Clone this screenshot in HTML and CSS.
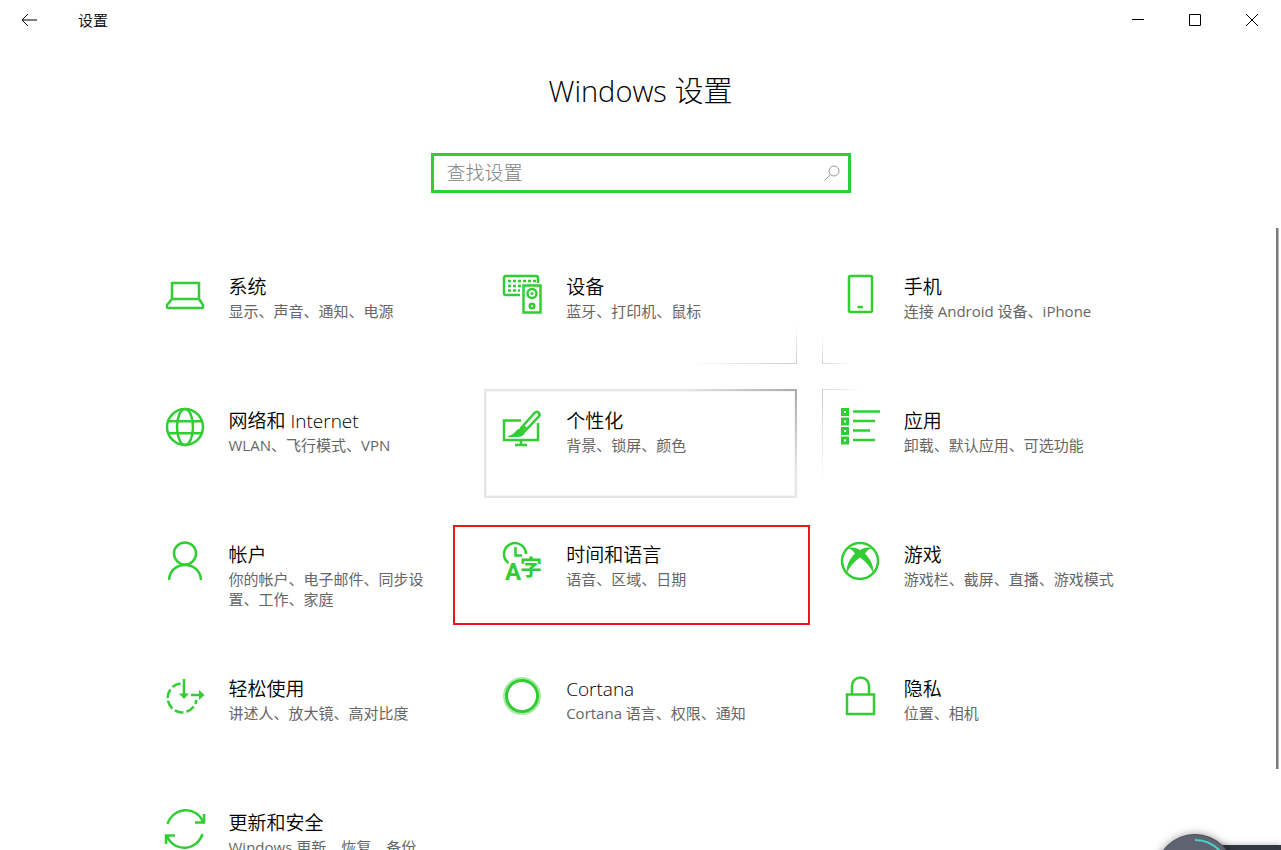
FILE: index.html
```html
<!DOCTYPE html>
<html lang="zh-CN">
  <head>
    <meta charset="UTF-8" />
    <meta name="viewport" content="width=device-width, initial-scale=1.0" />
    <title>设置</title>
    <link rel="stylesheet" href="styles.css">
  </head>
  <body>
    <header class="titlebar">
      <button class="back" aria-label="返回">
        <svg width="16" height="14" viewBox="0 0 16 14"><path d="M7 1L1 7l6 6M1 7h15" /></svg>
      </button>
      <span class="app-name">设置</span>
      <div class="window-buttons">
        <button aria-label="最小化"><svg width="12" height="12" viewBox="0 0 12 12"><path d="M0 5.5h12" /></svg></button>
        <button aria-label="最大化"><svg width="12" height="12" viewBox="0 0 12 12"><path d="M.5.5h11v11H.5z" /></svg></button>
        <button aria-label="关闭"><svg width="12" height="12" viewBox="0 0 12 12"><path d="M0 0l12 12M12 0L0 12" /></svg></button>
      </div>
    </header>

    <h1>Windows 设置</h1>

    <form class="search">
      <input type="text" placeholder="查找设置" aria-label="查找设置" />
      <button type="button" aria-label="搜索">
        <svg width="16" height="16" viewBox="0 0 16 16"><circle cx="10" cy="6" r="5" /><path d="M6.5 9.5L.5 15.5" /></svg>
      </button>
    </form>

    <main class="content">
      <nav class="tiles">
        <a class="tile" href="#system">
          <svg class="icon" viewBox="0 0 38 38"><path d="M6 9h27v16H6zM6 25l-5 6v2q0 1 1 1h34q1 0 1-1v-2l-4-6" /></svg>
          <div class="text">
            <h2>系统</h2>
            <p>显示、声音、通知、电源</p>
          </div>
        </a>
        <a class="tile near-above" href="#devices">
          <svg class="icon" viewBox="0 0 38 38">
            <path d="M17 21H3q-2 0-2-2V4q0-2 2-2h30q2 0 2 2v5" />
            <path class="keys" d="M5 7h29M5 12h15M5 16.500h3M10 16.500h7" />
            <path d="M20.500 11.500h17v27h-17z" />
            <circle cx="29" cy="19.500" r="4.500" stroke-width="2.500" /><circle class="fill" cx="29" cy="19.500" r="1.500" />
            <circle cx="29" cy="32" r="2.300" stroke-width="2.500" />
          </svg>
          <div class="text">
            <h2>设备</h2>
            <p>蓝牙、打印机、鼠标</p>
          </div>
        </a>
        <a class="tile near-corner" href="#phone">
          <svg class="icon" viewBox="0 0 38 38"><rect x="8" y="2" width="23" height="36" rx="1.500" /><path d="M16.500 33h5.500" /></svg>
          <div class="text">
            <h2>手机</h2>
            <p>连接 Android 设备、iPhone</p>
          </div>
        </a>
        <a class="tile" href="#network">
          <svg class="icon" viewBox="0 0 38 38"><circle cx="19" cy="19" r="18" /><ellipse cx="19" cy="19" rx="8" ry="18" /><path d="M2 13.300h34M2 25.300h34" /></svg>
          <div class="text">
            <h2>网络和 Internet</h2>
            <p>WLAN、飞行模式、VPN</p>
          </div>
        </a>
        <a class="tile hovered" href="#personalization">
          <svg class="icon" viewBox="0 0 38 38">
            <path d="M18 12.500H1V32h34V15M18 32v5M12 37h12" />
            <path d="M18 20L31.500 5q2.200-2.200 4.200-.4 1.900 2-.3 4.200L21.500 23.500zM20 18l3.500 3.500" />
            <path class="fill" d="M5 28q5-1 8-5 3-3.500 6.500-1.500 3.500 3 1 5.500-2 2-6 2H5z" />
          </svg>
          <div class="text">
            <h2>个性化</h2>
            <p>背景、锁屏、颜色</p>
          </div>
        </a>
        <a class="tile near-right" href="#apps">
          <svg class="icon" viewBox="0 0 38 38">
            <path stroke-width="3" d="M1.500 1.500h5v5h-5zM1.500 11h5v5h-5zM1.500 20.500h5v5h-5zM1.500 30h5v5h-5z" />
            <path stroke-width="2.500" d="M12 3.500h27M12 13h22M12 22.500h17M12 32h22" />
          </svg>
          <div class="text">
            <h2>应用</h2>
            <p>卸载、默认应用、可选功能</p>
          </div>
        </a>
        <a class="tile" href="#accounts">
          <svg class="icon" viewBox="0 0 38 38"><circle cx="19" cy="11.500" r="11" /><path d="M3 38c1-20 31-20 32 0" /></svg>
          <div class="text">
            <h2>帐户</h2>
            <p>你的帐户、电子邮件、同步设<br>置、工作、家庭</p>
          </div>
        </a>
        <a class="tile marked" href="#time">
          <svg class="icon" viewBox="0 0 38 38">
            <path d="M5.500 21A11 11 0 1 1 23 12M12.500 5v8.500H19" />
            <text class="latin" x="2" y="38">A</text>
            <text class="hanzi" x="17" y="33">字</text>
          </svg>
          <div class="text">
            <h2>时间和语言</h2>
            <p>语音、区域、日期</p>
          </div>
        </a>
        <a class="tile" href="#gaming">
          <svg class="icon" viewBox="0 0 38 38">
            <circle cx="19" cy="19" r="18" />
            <path class="fill" d="M7 6.500c4-2 8-1 12 1.500 4-2.500 8-3.500 12-1.500-3 .5-5 2-7 5 6 6 9 13 8 19-3-6-7-11-13-15-6 4-10 9-13 15-1-6 2-13 8-19-2-3-4-4.500-7-5z" />
          </svg>
          <div class="text">
            <h2>游戏</h2>
            <p>游戏栏、截屏、直播、游戏模式</p>
          </div>
        </a>
        <a class="tile" href="#ease">
          <svg class="icon" viewBox="0 0 38 38">
            <path stroke-dasharray="9 3" d="M14.500 7.500A14.500 14.500 0 1 0 30.500 24" />
            <path d="M18 3v17M25 19h10" />
            <path class="fill" d="M13 17.500h10L18 23zM33 14v10l5.500-5z" />
          </svg>
          <div class="text">
            <h2>轻松使用</h2>
            <p>讲述人、放大镜、高对比度</p>
          </div>
        </a>
        <a class="tile" href="#cortana">
          <svg class="icon" viewBox="0 0 38 38"><circle class="halo" cx="19" cy="20" r="17" /><circle cx="19" cy="20" r="15.500" stroke-width="3" /></svg>
          <div class="text">
            <h2>Cortana</h2>
            <p>Cortana 语言、权限、通知</p>
          </div>
        </a>
        <a class="tile" href="#privacy">
          <svg class="icon" viewBox="0 0 38 38"><path d="M6 18.500h27V38H6zM11 18.500V10a8.500 8.500 0 0 1 17 0v8.500" /></svg>
          <div class="text">
            <h2>隐私</h2>
            <p>位置、相机</p>
          </div>
        </a>
        <a class="tile" href="#update">
          <svg class="icon" viewBox="0 0 38 38"><path d="M1.500 14C7-3 30-5 37 12M38 4v8.500h-9M36.500 24C31 41 8 43 1 26M0 34v-8.500h9" /></svg>
          <div class="text">
            <h2>更新和安全</h2>
            <p>Windows 更新、恢复、备份</p>
          </div>
        </a>
      </nav>
      <div class="scroll-thumb"></div>
    </main>

    <div class="float-widget">
      <div class="float-bar"></div>
      <div class="float-ball">
        <svg width="80" height="80" viewBox="0 0 80 80"><path d="M40 6a34 34 0 0 1 34 34" /></svg>
      </div>
    </div>
  </body>
</html>
```
FILE: styles.css
```css
* {
    box-sizing: border-box;
}

body {
    margin: 0;
    height: 100vh;
    display: flex;
    flex-direction: column;
    align-items: center;
    overflow: hidden;
    position: relative;
    background: #fff;
    color: #000;
    font-family: "Open Sans", "Noto Sans CJK SC", sans-serif;
}

button {
    padding: 0;
    border: none;
    background: none;
    display: flex;
    align-items: center;
    justify-content: center;
}

svg {
    fill: none;
    stroke: #000;
    overflow: visible;
}

.titlebar {
    width: 100%;
    height: 40px;
    flex-shrink: 0;
    display: flex;
    align-items: center;
    padding-right: 1px;
}

.back {
    width: 58px;
    height: 40px;
}

.app-name {
    margin-left: 20px;
    font-size: 15px;
    font-weight: 350;
    line-height: 20px;
}

.window-buttons {
    display: flex;
    margin-left: auto;
}

.window-buttons button {
    width: 57px;
    height: 40px;
}

h1 {
    margin: 30px 0 42px;
    font-size: 29px;
    font-weight: 300;
    line-height: 41px;
}

.search {
    width: 420px;
    height: 40px;
    flex-shrink: 0;
    display: flex;
    align-items: center;
    border: 3px solid #32cd32;
}

.search input {
    flex: 1;
    min-width: 0;
    padding: 0 0 0 13px;
    border: none;
    outline: none;
    background: none;
    font-family: inherit;
    font-size: 19px;
    font-weight: 300;
}

.search input::placeholder {
    color: #808080;
}

.search button {
    width: 32px;
    height: 34px;
}

.search svg {
    stroke: #999;
}

/* scrolling area */
.content {
    width: 100%;
    flex: 1;
    min-height: 0;
    margin-top: 35px;
    padding-top: 27px;
    overflow: hidden;
    position: relative;
}

.scroll-thumb {
    position: absolute;
    top: 0;
    right: 2px;
    width: 3px;
    height: 87%;
    background: #7a7a7a;
    border-right: 1px solid #bbb;
}

.tiles {
    max-width: 988px;
    margin: 0 auto;
    display: grid;
    grid-template-columns: repeat(3, 1fr);
    grid-auto-rows: 109px;
    gap: 25px;
}

.tile {
    display: flex;
    gap: 25px;
    padding: 19px 19px 0;
    position: relative;
    color: inherit;
    text-decoration: none;
    background-repeat: no-repeat;
}

.icon {
    width: 38px;
    height: 38px;
    flex-shrink: 0;
    stroke: #32cd32;
    stroke-width: 2.5;
}

.icon .fill {
    fill: #32cd32;
    stroke: none;
}

.icon .keys {
    stroke-dasharray: 3 2;
}

.icon .halo {
    stroke: #a9eaa9;
    stroke-width: 4;
}

.icon text {
    fill: #32cd32;
    stroke: none;
}

.icon .latin {
    font-family: Roboto, sans-serif;
    font-size: 24px;
    font-weight: 700;
}

.icon .hanzi {
    font-family: "Noto Sans CJK SC", sans-serif;
    font-size: 22px;
    font-weight: 700;
}

.text h2 {
    margin: 1px 0 2px;
    font-size: 19px;
    font-weight: 350;
    line-height: 24px;
}

.text p {
    margin: 0;
    color: #666;
    font-size: 15px;
    line-height: 20px;
}

.hovered {
    background-image:
        linear-gradient(to right, transparent, #aaa),
        linear-gradient(to top, transparent, #aaa);
    background-size: 110px 2px, 2px 80px;
    background-position: top right;
}

.hovered::before {
    content: "";
    position: absolute;
    inset: 0;
    z-index: -1;
    border: 2px solid #e6e6e6;
    box-shadow: inset 0 0 0 1px #f5f5f5;
}

.near-above {
    background-image:
        linear-gradient(to right, transparent, #ccc),
        linear-gradient(to bottom, transparent, #ccc);
    background-size: 105px 1px, 1px 40px;
    background-position: bottom right;
}

.near-corner {
    background-image:
        linear-gradient(to left, transparent, #d4d4d4),
        linear-gradient(to bottom, transparent, #d4d4d4);
    background-size: 28px 1px, 1px 30px;
    background-position: bottom left;
}

.near-right {
    background-image:
        linear-gradient(to left, transparent, #d4d4d4),
        linear-gradient(to top, transparent, #ccc);
    background-size: 40px 1px, 1px 95px;
    background-position: top left;
}

.marked::after {
    content: "";
    position: absolute;
    inset: 2px -13px 7px -31px;
    border: 2px solid #f0141e;
}

/* desktop assistant ball, half below the screen edge */
.float-widget {
    position: absolute;
    right: 0;
    bottom: -64px;
    width: 126px;
    height: 80px;
}

.float-bar {
    position: absolute;
    top: 11px;
    left: 40px;
    right: 0;
    height: 58px;
    background: #343842;
    box-shadow: 0 0 6px rgba(0, 0, 0, 0.3);
}

.float-ball {
    position: absolute;
    width: 80px;
    height: 80px;
    border: 1px solid #484b57;
    border-radius: 50%;
    background: #5f6270;
    box-shadow: 0 0 9px rgba(0, 0, 0, 0.4);
}

.float-ball svg {
    display: block;
    margin: -1px;
    stroke: #46d5c5;
    stroke-width: 2;
}
```
